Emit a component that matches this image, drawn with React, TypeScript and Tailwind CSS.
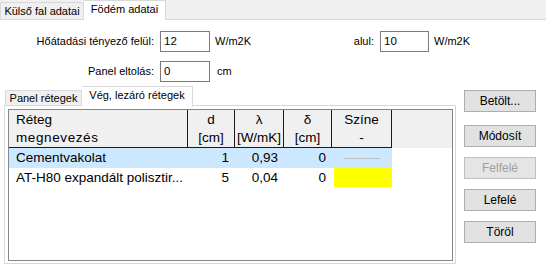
import React from "react";

const font = { fontFamily: '"Liberation Sans", Arial, sans-serif' };

function Btn({ label, disabled, mt }: { label: string; disabled?: boolean; mt: string }) {
  return (
    <div
      className={`${mt} h-[22px] w-[72px] flex items-center justify-center border text-[12px] ${
        disabled ? "border-[#bfbfbf] bg-[#e5e5e5] text-[#a0a0a0]" : "border-[#adadad] bg-[#e1e1e1] text-black"
      }`}
    >
      {label}
    </div>
  );
}

export default function App() {
  return (
    <div style={font} className="relative w-[546px] h-[266px] overflow-hidden bg-white text-black">
      {/* outer tab strip */}
      <div className="h-[20px] bg-[#f0f0f0] border-b border-[#d9d9d9] flex items-end">
        <div className="h-[17px] w-[84px] border border-b-0 border-[#d9d9d9] bg-[#f0f0f0] flex items-center justify-center text-[11px]">
          Külső fal adatai
        </div>
        <div className="relative h-[20px] w-[82px] -mb-px border border-l-0 border-b-0 border-[#d9d9d9] bg-white flex items-center justify-center text-[11px] pb-[2px]">
          Födém adatai
        </div>
      </div>

      {/* form rows */}
      <div className="mt-[11px] flex items-center h-[21px] text-[11px]">
        <span className="w-[154px] text-right">Hőátadási tényező felül:</span>
        <div className="ml-[6px] w-[50px] h-[21px] border border-[#7a7a7a] flex items-center pl-[3px] text-[11.5px]">12</div>
        <span className="ml-[5px] w-[100px]">W/m2K</span>
        <span className="w-[59px] text-right">alul:</span>
        <div className="ml-[6px] w-[49px] h-[21px] border border-[#7a7a7a] flex items-center pl-[3px] text-[11.5px]">10</div>
        <span className="ml-[5px]">W/m2K</span>
      </div>
      <div className="mt-[9px] flex items-center h-[21px] text-[11px]">
        <span className="w-[154px] text-right">Panel eltolás:</span>
        <div className="ml-[6px] w-[50px] h-[21px] border border-[#7a7a7a] flex items-center pl-[3px] text-[11.5px]">0</div>
        <span className="ml-[7px]">cm</span>
      </div>

      {/* main area */}
      <div className="mt-[4px] flex">
        {/* inner tab control */}
        <div className="ml-[4px] w-[452px] flex flex-col">
          <div className="h-[20px] flex items-end pl-[1px]">
            <div className="h-[16px] w-[77px] border border-b-0 border-[#d9d9d9] bg-[#f0f0f0] flex items-center justify-center text-[11px]">
              Panel rétegek
            </div>
            <div className="relative z-10 h-[21px] -mb-px w-[111px] border border-l-0 border-b-0 border-[#d9d9d9] bg-white flex items-center justify-center text-[11px] pb-[3px]">
              Vég, lezáró rétegek
            </div>
          </div>
          <div className="-mt-px h-[159px] border border-[#d9d9d9] bg-white pt-[3px] pl-[3px] pr-[2px] pb-[2px]">
            <div className="h-full border border-[#828790] bg-white flex flex-col text-[13.5px]">
              {/* header */}
              <div className="h-[38px] bg-[#f0f0f0] flex shrink-0">
                <div className="w-[179px] border-r border-b border-[#1a1a1a] pl-[7px] pt-[1px] leading-[18px]">
                  <div>Réteg</div>
                  <div className="tracking-[0.6px]">megnevezés</div>
                </div>
                <div className="w-[47px] border-r border-b border-[#1a1a1a] text-center pt-[1px] leading-[18px]">
                  <div>d</div>
                  <div>[cm]</div>
                </div>
                <div className="w-[49px] border-r border-b border-[#1a1a1a] text-center pt-[1px] leading-[18px]">
                  <div>λ</div>
                  <div>[W/mK]</div>
                </div>
                <div className="w-[48px] border-r border-b border-[#1a1a1a] text-center pt-[1px] leading-[18px]">
                  <div>δ</div>
                  <div>[cm]</div>
                </div>
                <div className="w-[60px] border-r border-b border-[#1a1a1a] text-center pt-[1px] leading-[18px]">
                  <div>Színe</div>
                  <div>-</div>
                </div>
                <div className="flex-1" />
              </div>
              {/* rows */}
              <div className="flex h-[20px] items-center">
                <div className="flex h-full items-center bg-[#cce8ff]">
                  <div className="w-[179px] pl-[7px]">Cementvakolat</div>
                  <div className="w-[47px] text-right pr-[6px]">1</div>
                  <div className="w-[49px] text-right pr-[6px]">0,93</div>
                  <div className="w-[48px] text-right pr-[6px]">0</div>
                  <div className="w-[60px] flex justify-center">
                    <div className="w-[36px] h-px bg-[#c0c0c0]" />
                  </div>
                </div>
              </div>
              <div className="flex h-[20px] items-center">
                <div className="w-[179px] pl-[7px] whitespace-nowrap">AT-H80 expandált polisztir...</div>
                <div className="w-[47px] text-right pr-[6px]">5</div>
                <div className="w-[49px] text-right pr-[6px]">0,04</div>
                <div className="w-[48px] text-right pr-[6px]">0</div>
                <div className="w-[60px] h-full flex justify-start pl-[2px]">
                  <div className="w-[58px] h-[19px] bg-[#ffff00]" />
                </div>
              </div>
            </div>
          </div>
        </div>

        {/* buttons */}
        <div className="ml-[8px] flex flex-col">
          <Btn label="Betölt..." mt="mt-[4px]" />
          <Btn label="Módosít" mt="mt-[13px]" />
          <Btn label="Felfelé" disabled mt="mt-[10px]" />
          <Btn label="Lefelé" mt="mt-[10px]" />
          <Btn label="Töröl" mt="mt-[10px]" />
        </div>
      </div>
    </div>
  );
}
